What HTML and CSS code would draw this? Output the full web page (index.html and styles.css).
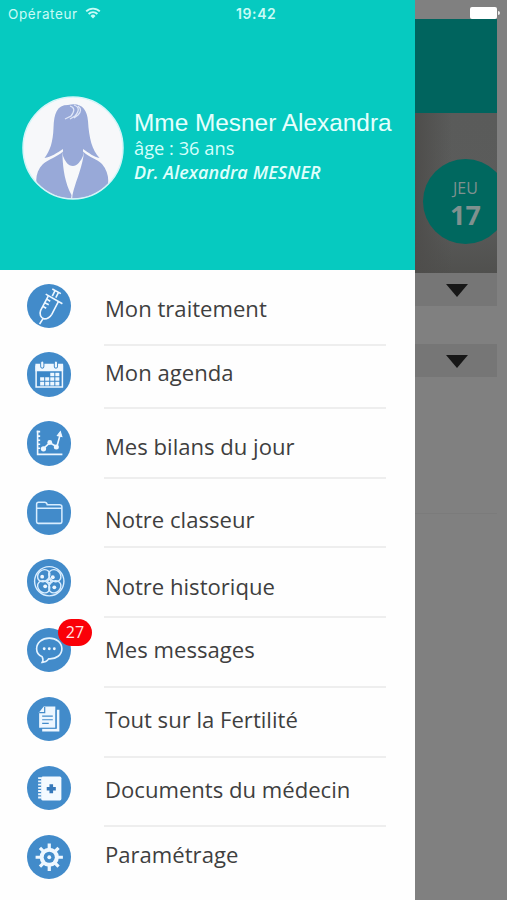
FILE: index.html
```html
<!DOCTYPE html>
<html lang="fr">
<head>
    <meta charset="UTF-8">
    <title>Menu</title>
    <link rel="stylesheet" href="styles.css">
</head>
<body>
<div class="screen">

    <div class="status-bar">
        <span class="carrier">Opérateur</span>
        <svg class="wifi" width="16" height="12" viewBox="0 0 16 12" fill="none" stroke="#c9fbf6" stroke-width="1.9">
            <path d="M1.2 4.4a9.6 9.6 0 0 1 13.6 0"/>
            <path d="M3.6 7a6.2 6.2 0 0 1 8.8 0"/>
            <path d="M8 11.4L5.5 8.9a3.5 3.5 0 0 1 5 0z" fill="#c9fbf6" stroke="none"/>
        </svg>
        <span class="clock">19:42</span>
        <span class="battery"></span>
    </div>

    <div class="drawer">
        <div class="profile">
            <svg class="avatar" width="102" height="104" viewBox="0 0 102 104">
                <defs>
                    <clipPath id="face"><ellipse cx="51" cy="52" rx="49.5" ry="50.5"/></clipPath>
                </defs>
                <ellipse cx="51" cy="52" rx="50" ry="51" fill="#f7f8fa"/>
                <g clip-path="url(#face)" fill="#98a9d8">
                    <!-- hair and face -->
                    <path d="M22.500 62C28 55 31 46 31.500 32C32 17 35 9 46 9C59 6 65 13 66 25C67 42 70 54 77.500 62C72 61 67 57 61 53V60C59 65 55 70 51 70C46 70 43 65 41 60V53C35 57 29 61 22.500 62Z"/>
                    <!-- jacket -->
                    <path d="M41 55.500C35 61 27 63 21 68C15 74 13 82 15 90C18 98 26 104 34 104H49L49.500 99C43 87 41 73 40.500 60Z"/>
                    <path d="M61 55.500C68 62 75 63 80 68C85 74 87 81 86 88C82 97 74 104 66 104H50L50.500 99C53 87 59 75 61.500 60Z"/>
                    <path d="M48 10q7 2 1 10l-6 3M52 9q8 3 1 11l-5 3M56 10q5 4 0 9l-4 3" fill="none" stroke="#dfe6f7" stroke-width="1.300"/>
                </g>
                <ellipse cx="51" cy="52" rx="50" ry="51" fill="none" stroke="#d4f5f8" stroke-width="1.500"/>
            </svg>
            <div class="profile-text">
                <div class="name">Mme Mesner Alexandra</div>
                <div class="age">âge : 36 ans</div>
                <div class="doctor">Dr. Alexandra MESNER</div>
            </div>
        </div>

        <div class="menu">
            <div class="icons">
                <!-- syringe -->
                <svg class="icon" viewBox="0 0 44 44" fill="none" stroke="#eef7ff" stroke-width="1.600">
                    <path d="M25 5l8.500 4.500M27.500 7l-2.500 5M31 8.500l-2.500 5M18.500 10l16.500 9.500"/>
                    <path d="M21 12l-7.500 14c-1.500 4 0 7.500 3.500 8.500c3.500 0 6-2 7.500-4.500L31 17.500M16 34l-3.500 5.500"/>
                    <path d="M19.500 15l3.500 2M17.500 18.500l4 2M15.500 22l3.500 2"/>
                </svg>
                <!-- calendar -->
                <svg class="icon" viewBox="0 0 44 44">
                    <path d="M9 14h26v20.500H9z" fill="#3a86c8" stroke="#eef7ff" stroke-width="1.500"/>
                    <path d="M8.300 11.500h27.400v7.500H8.300z" fill="#eef7ff"/>
                    <rect x="13.500" y="9" width="3.200" height="7" rx="1.600" fill="#eef7ff" stroke="#428bca"/>
                    <rect x="27" y="9" width="3.200" height="7" rx="1.600" fill="#eef7ff" stroke="#428bca"/>
                    <path d="M23 20.500h4v3.500h-4zM28 20.500h4v3.500h-4zM13 25h4v3.500h-4zM18 25h4v3.500h-4zM23 25h4v3.500h-4zM28 25h4v3.500h-4zM13 29.500h4V33h-4zM18 29.500h4V33h-4zM23 29.500h4V33h-4zM28 29.500h4V33h-4z" fill="#eef7ff"/>
                </svg>
                <!-- chart -->
                <svg class="icon" viewBox="0 0 44 44" fill="none" stroke="#eef7ff" stroke-width="1.600">
                    <path d="M10.500 9.500v23.500H35M9.500 10.500h3.500M10 15h3M10 19h3M10 23h3M10 27h3"/>
                    <path d="M16 27.500l6.500-6l7 4l3-11"/>
                    <path d="M30 14.500l3-4l1.500 5z" fill="#eef7ff" stroke-width="1"/>
                    <g fill="#eef7ff" stroke="none">
                        <circle cx="16.300" cy="27.500" r="2.600"/><circle cx="22.500" cy="21.300" r="2.400"/><circle cx="29" cy="25.700" r="2.500"/>
                    </g>
                </svg>
                <!-- folder -->
                <svg class="icon" viewBox="0 0 44 44" fill="none" stroke="#d8edff" stroke-width="1.500">
                    <path d="M9.500 31.500V14q0-2 2-2h6q2 0 2.500 2.500h12q2.500 0 2.500 2v15q0 1.500-1.500 1.500H11q-1.500 0-1.500-1.500zM10 18h24"/>
                </svg>
                <!-- embryo -->
                <svg class="icon" viewBox="0 0 44 44" fill="none" stroke="#d8edff" stroke-width="1.400">
                    <circle cx="22" cy="22" r="14.500"/>
                    <ellipse cx="16.500" cy="16.500" rx="6.500" ry="5.500" transform="rotate(-45 16.500 16.500)"/>
                    <ellipse cx="27.500" cy="16.500" rx="6.500" ry="5.500" transform="rotate(45 27.500 16.500)"/>
                    <ellipse cx="16.500" cy="27.500" rx="6.500" ry="5.500" transform="rotate(45 16.500 27.500)"/>
                    <ellipse cx="27.500" cy="27.500" rx="6.500" ry="5.500" transform="rotate(-45 27.500 27.500)"/>
                    <path d="M20 22l2-2l2 2l-2 2z"/>
                    <g fill="#eef7ff" stroke="none">
                        <circle cx="15" cy="17.500" r="1.900"/><circle cx="25.500" cy="18" r="1.900"/>
                        <circle cx="18" cy="27" r="1.900"/><circle cx="27" cy="28" r="1.900"/>
                    </g>
                </svg>
                <!-- messages -->
                <div class="icon-wrap">
                    <svg class="icon" viewBox="0 0 44 44" fill="none" stroke="#e4f3ff" stroke-width="1.600">
                        <path d="M15 28.500c-3.500-1.500-5.500-4.500-5.500-8c0-6 5.500-10.500 12.500-10.500s12.500 4.500 12.500 10.500S29 31 21.500 30.500c-1.500 2-4 3.500-6.500 3.500c1-1.500 1-3.500 0-5.500z"/>
                        <g fill="#eef7ff" stroke="none"><circle cx="17" cy="20.500" r="1.400"/><circle cx="22" cy="20.500" r="1.400"/><circle cx="27" cy="20.500" r="1.400"/></g>
                    </svg>
                    <span class="badge">27</span>
                </div>
                <!-- documents -->
                <svg class="icon" viewBox="0 0 44 44">
                    <path d="M29.500 12.500h2.500v21.500H15v-2.500h14.500z" fill="#eef7ff"/>
                    <path d="M16.500 9.500H28v21H12V15z" fill="#eef7ff"/>
                    <path d="M12 15.500h5.500V10M15 19h10.500M15 22.500h10.500M15 26h6.500" fill="none" stroke="#428bca" stroke-width="1.200"/>
                    <path d="M28.700 13v18H14" fill="none" stroke="#428bca" stroke-width=".7"/>
                </svg>
                <!-- medical notebook -->
                <svg class="icon" viewBox="0 0 44 44">
                    <rect x="14" y="10.500" width="20" height="23.500" rx="1.500" fill="#f4faff"/>
                    <path d="M11 12h3.500M11 15.200h3.500M11 18.400h3.500M11 21.600h3.500M11 24.800h3.500M11 28h3.500M11 31.200h3.500" stroke="#eef7ff" stroke-width="1.900"/>
                    <path d="M24 18v9M19.500 22.500h9" stroke="#3578ba" stroke-width="3.600"/>
                </svg>
                <!-- gear -->
                <svg class="icon" viewBox="0 0 44 44">
                    <g stroke="#eef7ff" stroke-width="3.200">
                        <path d="M22 8.500v27M8.500 22h27M12.800 12.800l18.400 18.400M31.200 12.800L12.800 31.200"/>
                    </g>
                    <circle cx="22" cy="22" r="9.500" fill="#eef7ff"/>
                    <circle cx="22" cy="22" r="5.500" fill="#428bca"/>
                    <circle cx="22" cy="22" r="1.900" fill="#eef7ff"/>
                </svg>
            </div>

            <div class="labels">
                <div class="label treatment">Mon traitement</div>
                <div class="label agenda">Mon agenda</div>
                <div class="label report">Mes bilans du jour</div>
                <div class="label binder">Notre classeur</div>
                <div class="label history">Notre historique</div>
                <div class="label messages">Mes messages</div>
                <div class="label fertility">Tout sur la Fertilité</div>
                <div class="label documents">Documents du médecin</div>
                <div class="label settings">Paramétrage</div>
            </div>
        </div>
    </div>

    <div class="page">
        <div class="page-header"></div>
        <div class="photo">
            <div class="day">
                <span class="day-name">JEU</span>
                <span class="day-number">17</span>
            </div>
        </div>
        <div class="section"><span class="arrow"></span></div>
        <div class="section second"><span class="arrow"></span></div>
        <div class="page-end"></div>
    </div>

</div>
</body>
</html>
```
FILE: styles.css
```css
body {
    margin: 0;
    font-family: "Open Sans", "Noto Sans", sans-serif;
    background: #808080;
}

.screen {
    position: relative;
    display: flex;
    width: 507px;
    height: 900px;
    overflow: hidden;
}

/* status bar lies over the drawer and the page */
.status-bar {
    position: absolute;
    top: 0;
    left: 0;
    z-index: 2;
    box-sizing: border-box;
    display: flex;
    align-items: center;
    width: 507px;
    height: 27px;
    padding-left: 8px;
    font-family: Inter, "Liberation Sans", sans-serif;
    font-size: 13.5px;
    color: #c9fbf6;
}

.carrier {
    width: 70px;
    letter-spacing: 0.6px;
    white-space: nowrap;
}

.wifi {
    margin-left: 7px;
    margin-top: -2px;
}

.clock {
    width: 42px;
    margin-left: 135px;
    font-size: 14px;
    font-weight: 600;
    letter-spacing: 0.6px;
    white-space: nowrap;
}

.battery {
    width: 27px;
    height: 12px;
    margin-left: 192px;
    margin-top: -1px;
    background: #fff;
    border-radius: 2px;
}

.battery::after {
    content: "";
    display: block;
    width: 2px;
    height: 4px;
    margin: 4px 0 0 28px;
    background: #eee;
    border-radius: 0 2px 2px 0;
}

.drawer {
    flex: none;
    width: 415px;
    background: #fefefe;
}

.profile {
    box-sizing: border-box;
    display: flex;
    height: 270px;
    padding: 96px 0 0 21.5px;
    background: #06cac0;
}

.avatar {
    flex: none;
}

.profile-text {
    padding: 12px 0 0 10.5px;
    white-space: nowrap;
    color: #d5fffb;
}

.name {
    font-family: "Liberation Sans", Arial, sans-serif;
    font-size: 24.4px;
    line-height: 30px;
    color: #e6fffd;
}

.age {
    margin-top: -1px;
    font-size: 18.3px;
    line-height: 22px;
}

.doctor {
    padding-top: 1px;
    font-size: 18px;
    font-style: italic;
    font-weight: 600;
    line-height: 24px;
    letter-spacing: 0.1px;
    color: #e0fffc;
}

.menu {
    display: flex;
    height: 630px;
}

.icons {
    display: flex;
    flex-direction: column;
    gap: 24.4px;
    width: 77.5px;
    padding: 13.5px 0 0 26.5px;
}

.icon {
    display: block;
    flex: none;
    width: 44.5px;
    height: 44.5px;
    border-radius: 50%;
    background: #428bca;
}

.icon-wrap {
    position: relative;
    width: 44.5px;
    height: 44.5px;
}

.badge {
    position: absolute;
    top: -9px;
    left: 31.5px;
    width: 34px;
    height: 27px;
    border-radius: 14px;
    background: #fa0008;
    color: #ffe5e5;
    font-size: 16px;
    line-height: 27px;
    text-align: center;
}

.labels {
    width: 282px;
}

.label {
    box-sizing: border-box;
    height: 70px;
    padding-left: 1px;
    border-bottom: 2px solid #eeeeee;
    font-size: 22.1px;
    line-height: 30px;
    color: #3f3f3f;
    white-space: nowrap;
}

.treatment {
    height: 75.5px;
    padding-top: 22.5px;
}

.agenda {
    height: 63.5px;
    padding-top: 11px;
}

.report {
    padding-top: 22px;
}

.binder {
    height: 69px;
    padding-top: 25px;
}

.history {
    padding-top: 23px;
}

.messages {
    padding-top: 16px;
}

.fertility {
    padding-top: 16px;
}

.documents {
    height: 69px;
    padding-top: 16px;
}

.settings {
    padding-top: 12px;
    border-bottom: none;
}

/* dimmed page behind the drawer */
.page {
    width: 82px;
    padding-top: 18.5px;
    background: #808080;
}

.page-header {
    height: 94.5px;
    background: #00645e;
}

.photo {
    height: 160px;
    overflow: hidden;
    background: linear-gradient(90deg, #4e4d4b, transparent 45%), linear-gradient(#5a5b5a, #5b5c5b 65%, #50504e);
}

.day {
    display: flex;
    flex-direction: column;
    align-items: center;
    box-sizing: border-box;
    width: 85px;
    height: 85px;
    margin: 46px 0 0 8px;
    padding-top: 17px;
    border-radius: 50%;
    background: #00685f;
    color: #7f918f;
}

.day-name {
    font-size: 16px;
    line-height: 24px;
}

.day-number {
    font-size: 27px;
    font-weight: 700;
    line-height: 29px;
}

.section {
    display: flex;
    justify-content: center;
    box-sizing: border-box;
    height: 33px;
    padding: 11px 0 0 1px;
    background: #767676;
}

.second {
    margin-top: 38px;
}

.arrow {
    width: 0;
    height: 0;
    border-left: 11px solid transparent;
    border-right: 11px solid transparent;
    border-top: 13px solid #171717;
}

.page-end {
    height: 136px;
    border-bottom: 1px solid #7b7b7b;
}
```
